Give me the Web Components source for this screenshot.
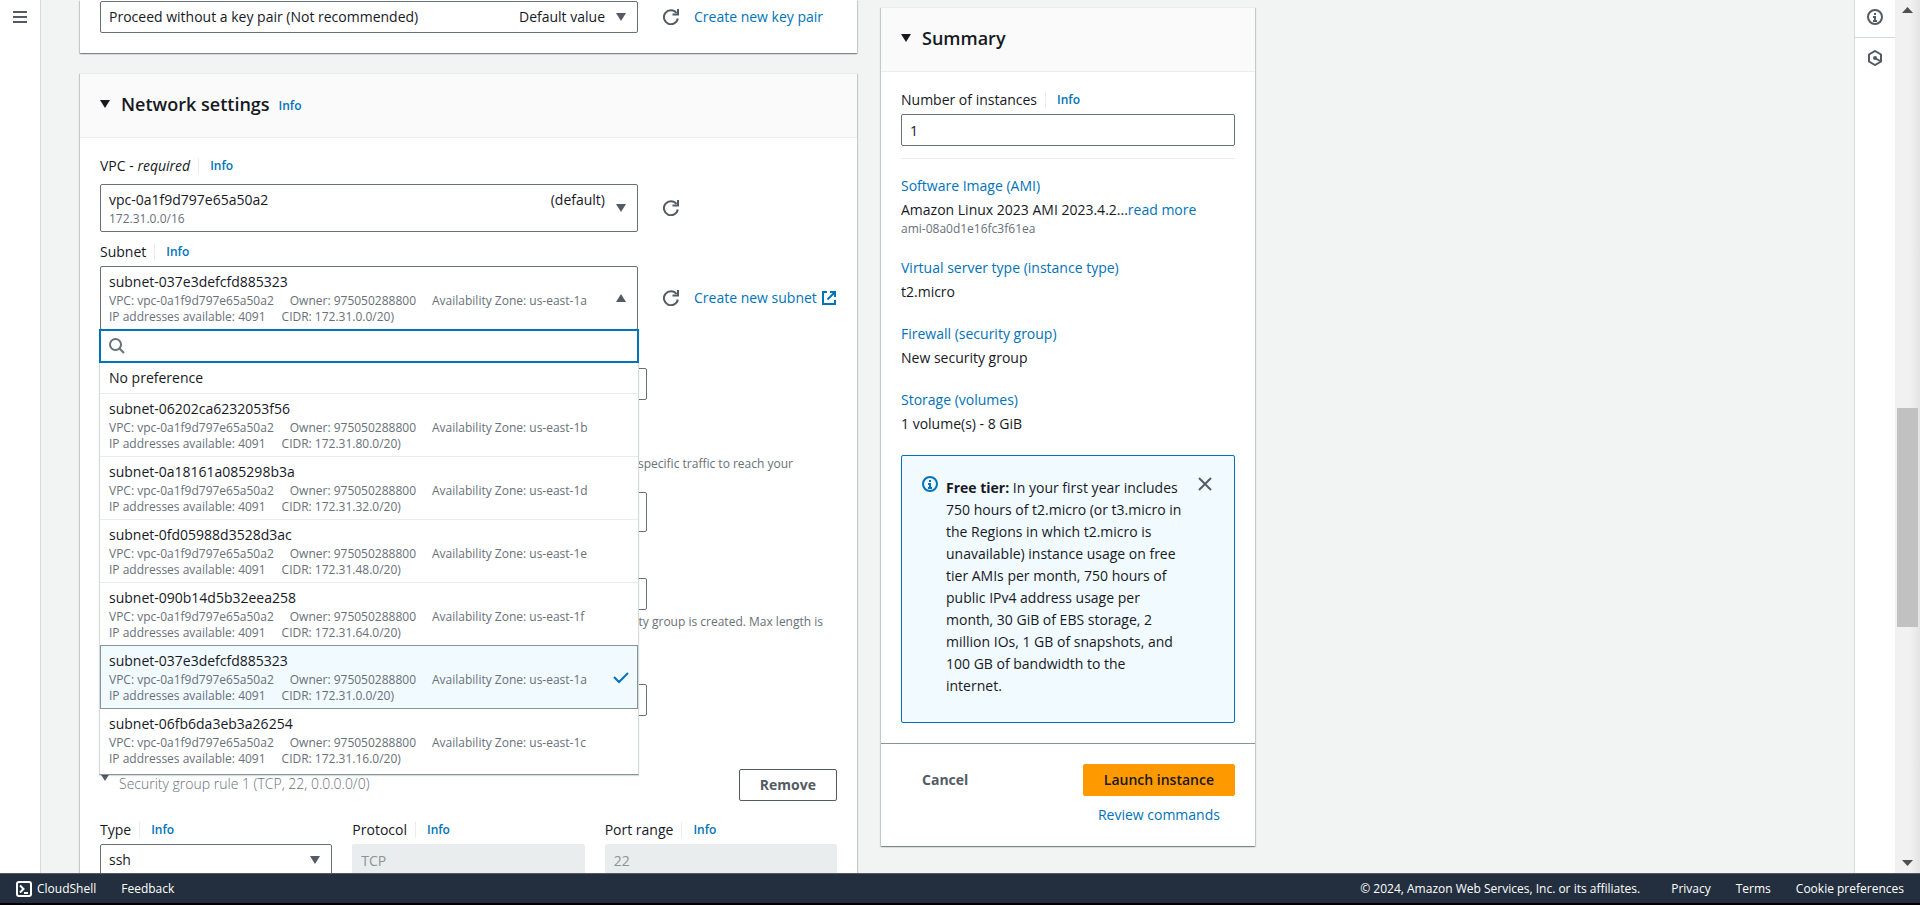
<!DOCTYPE html>
<html lang="en">
<head>
<meta charset="utf-8">
<title>Launch an instance | EC2</title>
<style>
  html, body {
    margin: 0;
    height: 100%;
    overflow: hidden;
  }
  body {
    --text: #16191f;
    --muted: #687078;
    --link: #0073bb;
    --icon: #545b64;
    --line: #eaeded;
    font: 14px/22px "Open Sans", "Noto Sans", sans-serif;
    color: var(--text);
    background: #f2f3f3;
  }
</style>
</head>
<body>
<launch-page></launch-page>

<script>
// Shared rules, each shadow root gets its own copy.
const BASE = `
  *, *::before, *::after { box-sizing: border-box; }
  a { color: var(--link); text-decoration: none; }
  button, input, select { font: inherit; color: inherit; margin: 0; }
`;

class BaseElement extends HTMLElement {
  constructor() {
    super();
    this.attachShadow({ mode: 'open' });
  }

  connectedCallback() {
    this.shadowRoot.innerHTML = `<style>${BASE}${this.styles()}</style>${this.render()}`;
  }

  styles() { return ''; }
  render() { return '<slot></slot>'; }
}

const ICONS = {
  menu: '<path d="M1 3h14M1 8h14M1 13h14"/>',
  refresh: '<path d="M14.8 9.500a7 7 0 1 1-1.300-5.500"/><path d="M15 0v5.500H9.500"/>',
  external: '<path d="M6 2H2v12h12v-4M9 2h5v5M14 2L6.500 9.500"/>',
  search: '<circle cx="6.500" cy="6.500" r="5.500"/><path d="M10.500 10.500l4.500 4.500"/>',
  check: '<path d="M1 8l5 5 9-9"/>',
  close: '<path d="M2 2l12 12M14 2L2 14"/>',
  info: '<circle cx="8" cy="8" r="7"/><path d="M8 4v2M6 8h2v4M6 12h4"/>',
  hex: '<path d="M8 1l6 3.500v7L8 15l-6-3.500v-7z"/><circle cx="8" cy="8" r="2" fill="currentColor" stroke="none"/><path d="M8 8l5 3"/>',
  down: '<path d="M3 4h10l-5 8z" fill="currentColor" stroke="none"/>',
  up: '<path d="M3 12h10L8 4z" fill="currentColor" stroke="none"/>',
  shell: '<rect x="1" y="1" width="14" height="14" rx="2"/><path d="M4 4.500l3.500 3.500L4 11.500M8 12h4"/>'
};

class UiIcon extends BaseElement {
  styles() {
    return `
      :host { display: inline-flex; flex: none; width: 16px; height: 16px; }
      svg { width: 100%; height: 100%; fill: none; stroke: currentColor; stroke-width: 2px; }
    `;
  }
  render() {
    return `<svg viewBox="0 0 16 16" aria-hidden="true">${ICONS[this.getAttribute('name')]}</svg>`;
  }
}
customElements.define('ui-icon', UiIcon);

class UiCard extends BaseElement {
  styles() {
    return `
      :host {
        display: block;
        background: #fff;
        border-top: 1px solid var(--line);
        box-shadow: 0 1px 1px 0 rgba(0,28,36,.3), 1px 1px 1px 0 rgba(0,28,36,.15), -1px 1px 1px 0 rgba(0,28,36,.15);
      }
      :host([continued]) { border-top: 0; }
      header {
        display: flex;
        align-items: center;
        gap: 9px;
        height: 64px;
        padding: 0 20px 4px;
        background: #fafafa;
        border-bottom: 1px solid var(--line);
      }
      header button { display: flex; align-items: center; gap: 9px; padding: 0; border: 0; background: none; }
      header ui-icon { margin-left: -3px; margin-right: -1px; }
      h2 { margin: 0; font-size: 18px; line-height: 22px; font-weight: 600; }
      header a { font-size: 12px; font-weight: 600; padding-top: 4px; }
      .body { padding: 16px 20px 20px; }
      :host([continued]) .body { padding-top: 1px; }
    `;
  }
  render() {
    const title = this.getAttribute('heading');
    const info = this.hasAttribute('info') ? '<a href="#">Info</a>' : '';
    const header = title
      ? `<header><button type="button" aria-expanded="true"><ui-icon name="down"></ui-icon><h2>${title}</h2></button>${info}</header>`
      : '';
    return `${header}<div class="body"><slot></slot></div><slot name="footer"></slot>`;
  }
}
customElements.define('ui-card', UiCard);

// Label, Info link and the row that holds the control.
// "covered" fields sit under an open dropdown, so their label is not painted.
class FieldElement extends BaseElement {
  styles() {
    return `
      :host { display: block; --control-width: 547px; --label-gap: 8px; min-width: 0; }
      :host([wide]) { --control-width: 100%; }
      :host([with-actions]) { --control-width: 538px; }
      :host([tight]) { --label-gap: 4px; }
      :host([covered]) .label { visibility: hidden; }
      .label { display: flex; align-items: center; height: 22px; padding-top: 2px; margin-bottom: var(--label-gap); }
      .label a {
        display: flex;
        align-items: center;
        margin-left: 8px;
        padding-left: 11px;
        height: 16px;
        border-left: 1px solid var(--line);
        font-size: 12px;
        font-weight: 600;
      }
      .row { display: flex; align-items: center; }
      .control { position: relative; flex: 0 1 var(--control-width); min-width: 0; }
    `;
  }
  render() {
    const label = this.getAttribute('label');
    const required = this.hasAttribute('required') ? ' - <i>required</i>' : '';
    const info = this.hasAttribute('info') ? '<a href="#">Info</a>' : '';
    return `
      ${label ? `<div class="label"><label for="control">${label}${required}</label>${info}</div>` : ''}
      <div class="row">
        <div class="control">${this.control()}</div>
        <slot name="actions"></slot>
      </div>
    `;
  }
}

class UiInput extends FieldElement {
  styles() {
    return super.styles() + `
      input {
        display: block;
        width: 100%;
        height: 32px;
        padding: 4px 8px;
        background: #fff;
        border: 1px solid var(--muted);
        border-radius: 2px;
      }
      input:disabled { color: #879596; background: var(--line); border-color: var(--line); }
    `;
  }
  control() {
    const disabled = this.hasAttribute('disabled') ? 'disabled' : '';
    return `<input id="control" type="text" value="${this.getAttribute('value') || ''}" ${disabled}>`;
  }
}
customElements.define('ui-input', UiInput);

class UiSelect extends FieldElement {
  styles() {
    return super.styles() + `
      .box {
        display: grid;
        grid-template-columns: minmax(0, 1fr) auto 16px;
        column-gap: 8px;
        padding: 4px 8px;
        background: #fff;
        border: 1px solid var(--muted);
        border-radius: 2px;
      }
      select {
        appearance: none;
        height: 22px;
        padding: 0;
        border: 0;
        outline: 0;
        background: none;
      }
      .box > ui-icon { grid-area: 1 / 3 / span 2 / auto; align-self: center; color: var(--icon); }
      ::slotted([slot="details"]) { grid-column: 1 / 3; }
      .dropdown { position: absolute; z-index: 1; top: calc(100% - 1px); left: -1px; right: -1px; }
    `;
  }
  control() {
    const open = this.hasAttribute('open');
    return `
      <div class="box">
        <select id="control" aria-label="${this.getAttribute('label') || 'Key pair name'}"><option>${this.getAttribute('value') || ''}</option></select>
        <span>${this.getAttribute('tag') || ''}</span>
        <ui-icon name="${open ? 'up' : 'down'}"></ui-icon>
        <slot name="details"></slot>
      </div>
      ${open ? '<div class="dropdown"><slot name="dropdown"></slot></div>' : ''}
    `;
  }
}
customElements.define('ui-select', UiSelect);

class DetailLines extends BaseElement {
  styles() {
    return `
      :host { display: block; font-size: 12px; line-height: 16px; color: var(--muted); white-space: nowrap; }
      div { display: flex; gap: 16px; }
    `;
  }
  render() {
    const lines = this.getAttribute('lines').split('|');
    return lines.map(line => `<div>${line.split(';').map(t => `<span>${t}</span>`).join('')}</div>`).join('');
  }
}
customElements.define('detail-lines', DetailLines);

const SUBNETS = [
  ['subnet-06202ca6232053f56', 'us-east-1b', '172.31.80.0/20'],
  ['subnet-0a18161a085298b3a', 'us-east-1d', '172.31.32.0/20'],
  ['subnet-0fd05988d3528d3ac', 'us-east-1e', '172.31.48.0/20'],
  ['subnet-090b14d5b32eea258', 'us-east-1f', '172.31.64.0/20'],
  ['subnet-037e3defcfd885323', 'us-east-1a', '172.31.0.0/20'],
  ['subnet-06fb6da3eb3a26254', 'us-east-1c', '172.31.16.0/20']
];
const SELECTED = SUBNETS[4];

function subnetLines([, zone, cidr]) {
  return `VPC: vpc-0a1f9d797e65a50a2;Owner: 975050288800;Availability Zone: ${zone}|IP addresses available: 4091;CIDR: ${cidr})`;
}

class SubnetList extends BaseElement {
  styles() {
    return `
      :host { display: block; background: #fff; }
      .search {
        display: flex;
        align-items: center;
        gap: 8px;
        height: 34px;
        padding: 0 8px;
        border: 2px solid var(--link);
        color: var(--muted);
      }
      input { flex: 1; min-width: 0; border: 0; outline: 0; padding: 0; background: none; appearance: none; }
      .list {
        padding-bottom: 3px;
        border: 1px solid #d5dbdb;
        border-top: 0;
        border-bottom-color: #879596;
        box-shadow: 0 1px 1px 0 rgba(0,28,36,.15);
      }
      .option {
        display: flex;
        align-items: center;
        justify-content: space-between;
        padding: 4px 9px;
        border-top: 1px solid var(--line);
      }
      .option:first-child { border-top: 0; }
      .selected {
        background: #f1faff;
        box-shadow: inset 1px 0 #879596, inset -1px 0 #879596;
        border-top-color: #879596;
      }
      .selected + .option { border-top-color: #879596; }
      .selected ui-icon { color: var(--link); }
    `;
  }
  render() {
    const options = SUBNETS.map(subnet => {
      const selected = subnet === SELECTED;
      return `
        <div class="option ${selected ? 'selected' : ''}" role="option" aria-selected="${selected}">
          <div>${subnet[0]}<detail-lines lines="${subnetLines(subnet)}"></detail-lines></div>
          ${selected ? '<ui-icon name="check"></ui-icon>' : ''}
        </div>`;
    }).join('');
    return `
      <div class="search"><ui-icon name="search"></ui-icon><input type="search" aria-label="Filter subnets"></div>
      <div class="list" role="listbox" aria-label="Subnets">
        <div class="option" role="option">No preference</div>
        ${options}
      </div>
    `;
  }
}
customElements.define('subnet-list', SubnetList);

class RefreshAction extends BaseElement {
  styles() {
    return `
      :host { display: flex; align-items: center; }
      button { display: flex; padding: 0; margin: 0 15px 0 25px; border: 0; background: none; color: var(--icon); }
      a { display: flex; align-items: center; gap: 4px; white-space: nowrap; }
    `;
  }
  render() {
    const link = this.getAttribute('link');
    const icon = this.hasAttribute('external') ? '<ui-icon name="external"></ui-icon>' : '';
    return `<button type="button" aria-label="Refresh"><ui-icon name="refresh"></ui-icon></button>
      ${link ? `<a href="#">${link}${icon}</a>` : ''}`;
  }
}
customElements.define('refresh-action', RefreshAction);

class UiButton extends BaseElement {
  styles() {
    return `
      :host { display: inline-block; }
      button {
        height: 32px;
        padding: 0 20px;
        border: 1px solid var(--icon);
        border-radius: 2px;
        background: #fff;
        color: var(--icon);
        font-weight: 700;
      }
      :host([variant="primary"]) button { color: var(--text); background: #f90; border-color: #f90; font-weight: 600; }
      :host([variant="link"]) button { border-color: transparent; background: none; }
    `;
  }
  render() { return '<button type="button"><slot></slot></button>'; }
}
customElements.define('ui-button', UiButton);

class FieldHint extends BaseElement {
  styles() {
    return `
      :host {
        display: block;
        height: 32px;
        padding-right: 14px;
        margin: 4px 0;
        font-size: 12px;
        line-height: 16px;
        text-align: right;
        color: var(--muted);
      }
    `;
  }
}
customElements.define('field-hint', FieldHint);

class FirewallChoice extends BaseElement {
  styles() {
    return `
      :host { display: block; margin-top: 30px; }
      fieldset { margin: 0; padding: 0; border: 0; min-width: 0; }
      field-hint { margin-top: 26px; padding-right: 44px; }
      .tiles { display: grid; grid-template-columns: 1fr 1fr; gap: 16px; max-width: 547px; }
      label {
        display: flex;
        align-items: center;
        height: 40px;
        padding: 0 12px;
        border: 1px solid var(--muted);
        border-radius: 2px;
      }
    `;
  }
  render() {
    return `
      <fieldset aria-label="Firewall (security groups)">
        <field-hint>specific traffic to reach your</field-hint>
        <div class="tiles">
          <label><input type="radio" name="sg" aria-label="Create security group" checked></label>
          <label><input type="radio" name="sg" aria-label="Select existing security group"></label>
        </div>
      </fieldset>
    `;
  }
}
customElements.define('firewall-choice', FirewallChoice);

class SecurityRule extends BaseElement {
  styles() {
    return `
      :host { display: block; margin-top: 53px; }
      .head { display: flex; align-items: center; justify-content: space-between; height: 32px; margin-bottom: 17px; }
      .toggle {
        display: flex;
        align-items: flex-start;
        gap: 6px;
        height: 32px;
        padding: 0;
        border: 0;
        background: none;
        color: var(--muted);
        font-weight: 300;
        line-height: 30px;
      }
      .toggle ui-icon { margin-left: -3px; color: var(--icon); }
      .columns { display: grid; grid-template-columns: repeat(3, minmax(0, 1fr)); gap: 20px; }
    `;
  }
  render() {
    return `
      <div class="head">
        <button class="toggle" type="button" aria-expanded="true"><ui-icon name="down"></ui-icon>Security group rule 1 (TCP, 22, 0.0.0.0/0)</button>
        <ui-button>Remove</ui-button>
      </div>
      <div class="columns">
        <ui-select label="Type" info wide tight value="ssh"></ui-select>
        <ui-input label="Protocol" info wide tight disabled value="TCP"></ui-input>
        <ui-input label="Port range" info wide tight disabled value="22"></ui-input>
      </div>
    `;
  }
}
customElements.define('security-rule', SecurityRule);

class NetworkSettings extends BaseElement {
  styles() {
    return `
      :host { display: block; }
      ui-select + ui-select, .description { margin-top: 8px; }
      .name { margin-top: 16px; }
    `;
  }
  render() {
    return `
      <ui-card heading="Network settings" info>
        <ui-select label="VPC" required info with-actions value="vpc-0a1f9d797e65a50a2" tag="(default)">
          <detail-lines slot="details" lines="172.31.0.0/16"></detail-lines>
          <refresh-action slot="actions"></refresh-action>
        </ui-select>
        <ui-select label="Subnet" info with-actions tight open value="${SELECTED[0]}">
          <detail-lines slot="details" lines="${subnetLines(SELECTED)}"></detail-lines>
          <refresh-action slot="actions" link="Create new subnet" external></refresh-action>
          <subnet-list slot="dropdown"></subnet-list>
        </ui-select>
        <ui-select label="Auto-assign public IP" covered></ui-select>
        <firewall-choice></firewall-choice>
        <ui-input class="name" label="Security group name" covered></ui-input>
        <field-hint>rity group is created. Max length is</field-hint>
        <ui-input class="description" label="Description" covered></ui-input>
        <security-rule></security-rule>
      </ui-card>
    `;
  }
}
customElements.define('network-settings', NetworkSettings);

class UiAlert extends BaseElement {
  styles() {
    return `
      :host {
        display: flex;
        align-items: flex-start;
        gap: 8px;
        padding: 20px 20px 25px;
        background: #f1faff;
        border: 1px solid var(--link);
        border-radius: 2px;
      }
      .icon { color: var(--link); }
      .text { flex: 1; max-width: 237px; padding-top: 1px; }
      .close { display: flex; margin: 0 1px 0 auto; padding: 0; border: 0; background: none; color: var(--icon); }
    `;
  }
  render() {
    return `
      <ui-icon class="icon" name="info"></ui-icon>
      <div class="text"><slot></slot></div>
      <button class="close" type="button" aria-label="Dismiss"><ui-icon name="close"></ui-icon></button>
    `;
  }
}
customElements.define('ui-alert', UiAlert);

class SummaryItem extends BaseElement {
  styles() {
    return `
      :host { display: grid; gap: 2px; margin-bottom: 20px; }
      ::slotted(small) { display: block; font-size: 12px; line-height: 16px; color: var(--muted); }
    `;
  }
  render() { return `<a href="#">${this.getAttribute('heading')}</a><div><slot></slot></div>`; }
}
customElements.define('summary-item', SummaryItem);

class LaunchSummary extends BaseElement {
  styles() {
    return `
      :host { display: block; padding-top: 7px; }
      hr { margin: 12px 0 16px; border: 0; border-top: 1px solid var(--line); }
      .footer {
        display: flex;
        align-items: flex-start;
        justify-content: space-between;
        padding: 20px;
        border-top: 1px solid #879596;
      }
      .launch { display: grid; gap: 8px; justify-items: center; }
    `;
  }
  render() {
    return `
      <ui-card heading="Summary">
        <ui-input label="Number of instances" info wide tight value="1"></ui-input>
        <hr>
        <summary-item heading="Software Image (AMI)">Amazon Linux 2023 AMI 2023.4.2...<a href="#">read more</a><small>ami-08a0d1e16fc3f61ea</small></summary-item>
        <summary-item heading="Virtual server type (instance type)">t2.micro</summary-item>
        <summary-item heading="Firewall (security group)">New security group</summary-item>
        <summary-item heading="Storage (volumes)">1 volume(s) - 8 GiB</summary-item>
        <ui-alert><b>Free tier:</b> In your first year includes 750 hours of t2.micro (or t3.micro in the Regions in which t2.micro is unavailable) instance usage on free tier AMIs per month, 750 hours of public IPv4 address usage per month, 30 GiB of EBS storage, 2 million IOs, 1 GB of snapshots, and 100 GB of bandwidth to the internet.</ui-alert>
        <div class="footer" slot="footer">
          <ui-button variant="link">Cancel</ui-button>
          <div class="launch">
            <ui-button variant="primary">Launch instance</ui-button>
            <a href="#">Review commands</a>
          </div>
        </div>
      </ui-card>
    `;
  }
}
customElements.define('launch-summary', LaunchSummary);

class ToolRail extends BaseElement {
  styles() {
    return `
      :host { display: flex; flex-direction: column; width: 41px; background: #fff; }
      :host([side="left"]) { border-right: 1px solid #d5dbdb; }
      :host([side="right"]) { border-left: 1px solid #d5dbdb; }
    `;
  }
}
customElements.define('tool-rail', ToolRail);

class ScrollTrack extends BaseElement {
  styles() {
    return `
      :host {
        display: grid;
        grid-template-rows: 20px 388fr 219fr 226fr 20px;
        justify-items: center;
        width: 25px;
        background: linear-gradient(to right, #f1f1f1 60%, #e4e4e4);
      }
      svg { width: 11px; height: 6px; fill: #505050; align-self: center; }
      .thumb { grid-row: 3; width: 21px; background: #c1c1c1; }
      .end { grid-row: 5; }
    `;
  }
  render() {
    return `
      <svg viewBox="0 0 11 6"><path d="M0 6L5.500 0 11 6z"/></svg>
      <div class="thumb"></div>
      <svg class="end" viewBox="0 0 11 6"><path d="M0 0h11L5.500 6z"/></svg>
    `;
  }
}
customElements.define('scroll-track', ScrollTrack);

class ConsoleFooter extends BaseElement {
  styles() {
    return `
      :host {
        display: flex;
        align-items: center;
        gap: 25px;
        height: 32px;
        padding: 0 16px;
        background: #232f3e;
        border-top: 1px solid #545b64;
        border-bottom: 2px solid #000;
        font-size: 12px;
        font-weight: 400;
        color: #fff;
        white-space: nowrap;
      }
      a, button { display: flex; align-items: center; gap: 5px; padding: 0; border: 0; background: none; color: inherit; }
      .copyright { margin-left: auto; margin-right: 6px; }
    `;
  }
  render() {
    return `
      <button type="button"><ui-icon name="shell"></ui-icon>CloudShell</button>
      <a href="#">Feedback</a>
      <span class="copyright">© 2024, Amazon Web Services, Inc. or its affiliates.</span>
      <a href="#">Privacy</a>
      <a href="#">Terms</a>
      <a href="#">Cookie preferences</a>
    `;
  }
}
customElements.define('console-footer', ConsoleFooter);

class LaunchPage extends BaseElement {
  styles() {
    return `
      :host { display: flex; flex-direction: column; height: 100vh; }
      .frame { display: flex; flex: 1; min-height: 0; overflow: hidden; }
      main {
        flex: 1;
        min-width: 0;
        display: grid;
        grid-template-columns: minmax(0, 777px) minmax(0, 374px);
        align-items: start;
        gap: 24px;
        padding: 0 39px;
        overflow: hidden;
      }
      .forms { display: grid; gap: 20px; }
      tool-rail button {
        display: flex;
        align-items: center;
        justify-content: center;
        height: 37px;
        padding: 0 0 3px;
        border: 0;
        background: none;
        color: var(--icon);
      }
      tool-rail button + button { height: 41px; padding: 0; border-top: 1px solid #d5dbdb; }
    `;
  }
  render() {
    return `
      <div class="frame">
        <tool-rail side="left"><button type="button" aria-label="Open navigation"><ui-icon name="menu"></ui-icon></button></tool-rail>
        <main>
          <div class="forms">
            <ui-card continued>
              <ui-select with-actions value="Proceed without a key pair (Not recommended)" tag="Default value">
                <refresh-action slot="actions" link="Create new key pair"></refresh-action>
              </ui-select>
            </ui-card>
            <network-settings></network-settings>
          </div>
          <launch-summary></launch-summary>
        </main>
        <tool-rail side="right">
          <button type="button" aria-label="Info panel"><ui-icon name="info"></ui-icon></button>
          <button type="button" aria-label="Tutorials"><ui-icon name="hex"></ui-icon></button>
        </tool-rail>
        <scroll-track></scroll-track>
      </div>
      <console-footer></console-footer>
    `;
  }
}
customElements.define('launch-page', LaunchPage);
</script>
</body>
</html>
